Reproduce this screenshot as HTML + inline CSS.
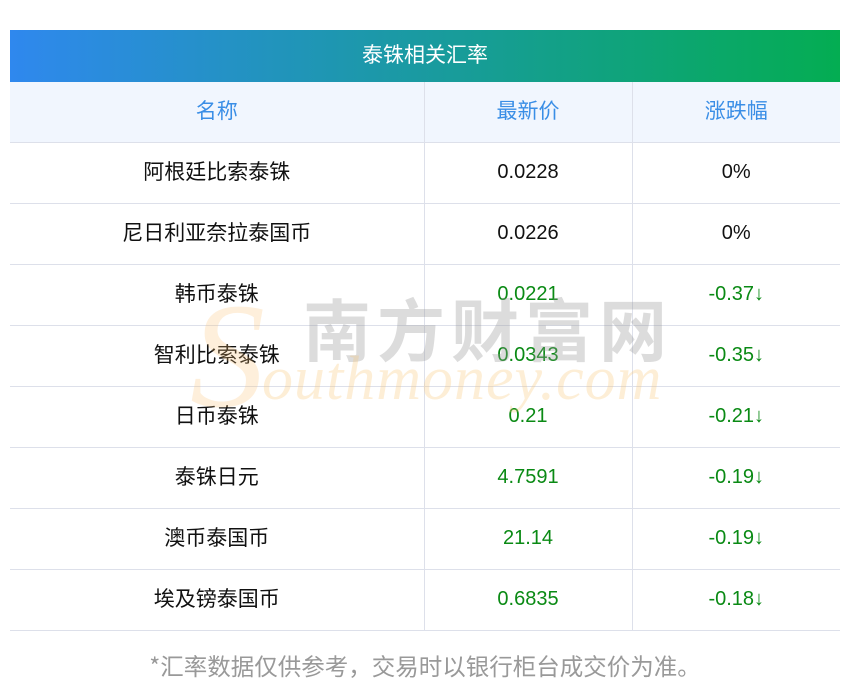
<!DOCTYPE html>
<html><head><meta charset="utf-8"><style>
body{margin:0;width:850px;height:697px;background:#fff;font-family:"Liberation Sans","Noto Sans CJK SC",sans-serif;position:relative;overflow:hidden}
.title{position:absolute;left:10px;top:30px;width:830px;height:52px;background:linear-gradient(90deg,#2f88ee,#04ad52);color:#fff;font-size:21px;text-align:center;line-height:48px;font-family:"Noto Sans CJK SC",sans-serif}
table{position:absolute;left:10px;top:82px;width:830px;border-collapse:collapse;table-layout:fixed}
td{height:60px;border-bottom:1px solid #dde0ea;border-left:1px solid #dde0ea;text-align:center;font-size:20px;color:#111;padding:0;vertical-align:middle;line-height:24px;padding-bottom:3px;height:57px}
td:first-child{border-left:none}
td.c{font-family:"Noto Sans CJK SC",sans-serif;font-size:21px;line-height:24px;padding-bottom:4px;height:56px}
tr.h td{background:#f1f6fe;color:#3a8ee6}
.g{color:#0a8a14}
.foot{position:absolute;left:0;width:850px;top:650px;text-align:center;color:#999;font-size:23.5px;line-height:30px;font-family:"Noto Sans CJK SC",sans-serif}
.wm1{position:absolute;left:303px;top:282px;font-size:68px;color:rgba(150,150,150,.33);letter-spacing:6px;font-weight:bold;font-family:"Noto Sans CJK SC",sans-serif;line-height:90px}
.wm2{position:absolute;left:262px;top:344px;font-size:62px;color:rgba(250,200,120,.3);font-style:italic;font-family:"Liberation Serif",serif;letter-spacing:1px}
.wm3{position:absolute;left:190px;top:270px;font-size:150px;color:rgba(250,190,110,.25);font-style:italic;font-family:"Liberation Serif",serif}
</style></head><body>
<div class="title">泰铢相关汇率</div>
<table>
<colgroup><col style="width:414px"><col style="width:208px"><col style="width:208px"></colgroup>
<tr class="h"><td class="c">名称</td><td class="c">最新价</td><td class="c">涨跌幅</td></tr>
<tr><td class="c">阿根廷比索泰铢</td><td>0.0228</td><td>0%</td></tr>
<tr><td class="c">尼日利亚奈拉泰国币</td><td>0.0226</td><td>0%</td></tr>
<tr><td class="c">韩币泰铢</td><td class="g">0.0221</td><td class="g">-0.37↓</td></tr>
<tr><td class="c">智利比索泰铢</td><td class="g">0.0343</td><td class="g">-0.35↓</td></tr>
<tr><td class="c">日币泰铢</td><td class="g">0.21</td><td class="g">-0.21↓</td></tr>
<tr><td class="c">泰铢日元</td><td class="g">4.7591</td><td class="g">-0.19↓</td></tr>
<tr><td class="c">澳币泰国币</td><td class="g">21.14</td><td class="g">-0.19↓</td></tr>
<tr><td class="c">埃及镑泰国币</td><td class="g">0.6835</td><td class="g">-0.18↓</td></tr>
</table>
<div class="wm3">S</div>
<div class="wm1">南方财富网</div>
<div class="wm2">outhmoney.com</div>
<div class="foot">*汇率数据仅供参考，交易时以银行柜台成交价为准。</div>
</body></html>
